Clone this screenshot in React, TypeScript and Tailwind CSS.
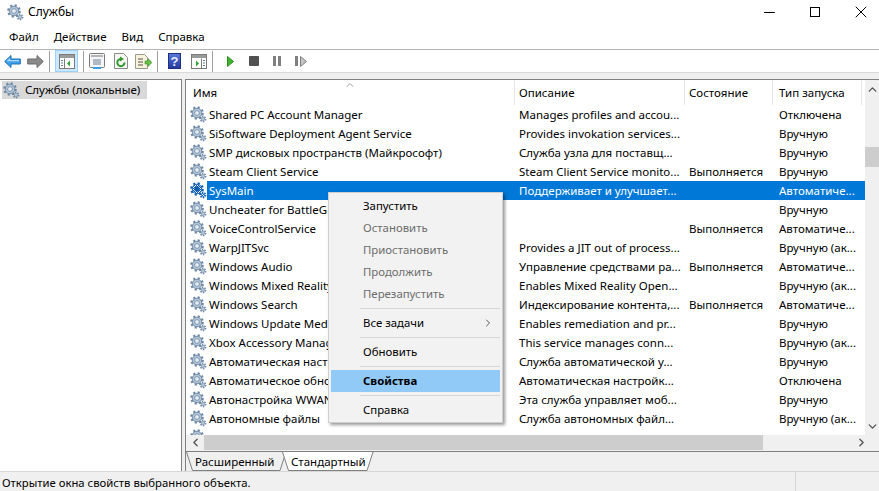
import { ChevronLeft, ChevronRight, ChevronUp, ChevronDown, X, Minus } from 'lucide-react';

const rows = [
  ['Shared PC Account Manager', 'Manages profiles and accou...', '', 'Отключена'],
  ['SiSoftware Deployment Agent Service', 'Provides invokation services...', '', 'Вручную'],
  ['SMP дисковых пространств (Майкрософт)', 'Служба узла для поставщ...', '', 'Вручную'],
  ['Steam Client Service', 'Steam Client Service monito...', 'Выполняется', 'Вручную'],
  ['SysMain', 'Поддерживает и улучшает...', '', 'Автоматиче...'],
  ['Uncheater for BattleGrounds', '', '', 'Вручную'],
  ['VoiceControlService', '', 'Выполняется', 'Автоматиче...'],
  ['WarpJITSvc', 'Provides a JIT out of process...', '', 'Вручную (ак...'],
  ['Windows Audio', 'Управление средствами ра...', 'Выполняется', 'Автоматиче...'],
  ['Windows Mixed Reality OpenXR', 'Enables Mixed Reality Open...', '', 'Вручную (ак...'],
  ['Windows Search', 'Индексирование контента,...', 'Выполняется', 'Автоматиче...'],
  ['Windows Update Medic Service', 'Enables remediation and pr...', '', 'Вручную'],
  ['Xbox Accessory Management', 'This service manages conn...', '', 'Вручную (ак...'],
  ['Автоматическая настройка', 'Служба автоматической у...', '', 'Вручную'],
  ['Автоматическое обновление', 'Автоматическая настройк...', '', 'Отключена'],
  ['Автонастройка WWAN', 'Эта служба управляет моб...', '', 'Вручную'],
  ['Автономные файлы', 'Служба автономных файл...', '', 'Вручную (ак...'],
  ['', '', '', ''],
];

const Gear = ({ selected = false }: { selected?: boolean }) => {
  const dark = selected ? '#0f5fb4' : '#6c87a4';
  const light = selected ? 'url(#dither)' : '#b4c5d6';
  return (
    <svg width="17" height="17" viewBox="0 0 17 17" className="shrink-0">
      {selected && (
        <pattern id="dither" width="2" height="2" patternUnits="userSpaceOnUse">
          <rect width="2" height="2" fill="#0a5cb0" />
          <rect width="1" height="1" fill="#ffffff" />
          <rect x="1" y="1" width="1" height="1" fill="#ffffff" />
        </pattern>
      )}
      <circle cx="7" cy="7" r="5.5" fill="none" stroke={dark} strokeWidth="2.6" strokeDasharray="2 2.32" />
      <circle cx="7" cy="7" r="4.8" fill={light} stroke={dark} strokeWidth="0.9" />
      <circle cx="7" cy="7" r="2.4" fill={selected ? '#0a5cb0' : '#e6edf4'} stroke={dark} strokeWidth="0.8" />
      <circle cx="13" cy="13" r="2.6" fill="none" stroke={dark} strokeWidth="1.6" strokeDasharray="1.4 1.3" />
      <circle cx="13" cy="13" r="1.8" fill={light} stroke={dark} strokeWidth="0.6" />
    </svg>
  );
};

const Sep = () => <div className="w-px h-[21px] bg-[#a0a0a0]" />;

const Slot = ({ children, className = '' }: { children: React.ReactNode; className?: string }) => (
  <div className={`w-[23px] h-[22px] flex items-center justify-center shrink-0 ${className}`}>{children}</div>
);

const PaneIcon = ({ right = false }: { right?: boolean }) => (
  <svg width="16" height="15" viewBox="0 0 16 15">
    <rect x="0.5" y="0.5" width="15" height="14" fill="#fff" stroke="#7b7b7b" />
    <rect x="1" y="1" width="14" height="3" fill="#9a9a9a" />
    {right ? (
      <>
        <path d="M10.5 4.5v10" stroke="#7b7b7b" />
        <path d="M12 6.5h2M12 9h2M12 11.5h2" stroke="#5f7f9f" />
        <path d="M5 6.5l3 3-3 3z" fill="#2fa52f" />
      </>
    ) : (
      <>
        <path d="M5.5 4.5v10" stroke="#7b7b7b" />
        <path d="M2 6.5h2M2 9h2M2 11.5h2" stroke="#5f7f9f" />
        <path d="M11 6.5l-3 3 3 3z" fill="#2fa52f" />
      </>
    )}
  </svg>
);

const Toolbar = () => (
  <div className="h-[22px] flex items-center bg-white pl-px shrink-0">
    <Slot>
      <svg width="17" height="13" viewBox="0 0 17 13">
        <path d="M7 .5L.7 6.5 7 12.5V9h9.3V4H7z" fill="#3f9fe8" stroke="#1d6fb8" />
        <path d="M6 3L2.5 6.3H15V5H6z" fill="#a8dcfb" />
      </svg>
    </Slot>
    <Slot>
      <svg width="17" height="13" viewBox="0 0 17 13">
        <path d="M10 .5l6.3 6-6.3 6V9H.7V4H10z" fill="#8a8a8a" stroke="#6a6a6a" />
      </svg>
    </Slot>
    <div className="ml-[2px]"><Sep /></div>
    <Slot className="ml-[5px] bg-[#cce8ff] border border-[#99d1ff]"><PaneIcon /></Slot>
    <div className="ml-[5px]"><Sep /></div>
    <Slot className="ml-[1px]">
      <svg width="16" height="16" viewBox="0 0 16 16">
        <rect x="0.5" y="0.5" width="15" height="14" rx="1" fill="#f5f5f5" stroke="#7b7b7b" />
        <rect x="2" y="2" width="12" height="2" fill="#b5b5b5" />
        <path d="M4 7h8M4 9h8M4 11h8" stroke="#6a7f96" />
        <rect x="4" y="14" width="8" height="2" fill="#36a0e8" />
      </svg>
    </Slot>
    <Slot className="ml-px">
      <svg width="14" height="16" viewBox="0 0 14 16">
        <path d="M.5.5h9l4 4v11H.5z" fill="#f7f7f2" stroke="#8c8c8c" />
        <path d="M10.5 9.5A3.6 3.6 0 1 1 7 6" fill="none" stroke="#2f9a2f" strokeWidth="2" />
        <path d="M6 3.5l4 2.6L6 8.5z" fill="#2f9a2f" />
      </svg>
    </Slot>
    <Slot>
      <svg width="17" height="15" viewBox="0 0 17 15">
        <path d="M.5.5h9l3 3v11H.5z" fill="#f6f2dc" stroke="#9a9a8a" />
        <path d="M3 5h5M3 8h5M3 11h5" stroke="#555" />
        <path d="M10 7h3V4.5L17 8.5l-4 4V10h-3z" fill="#6cc04a" stroke="#3f8f2a" strokeWidth="0.6" />
      </svg>
    </Slot>
    <div className="ml-[2px]"><Sep /></div>
    <Slot className="ml-[5px]">
      <div className="w-[13px] h-[16px] bg-gradient-to-b from-[#5a78d8] to-[#2438a0] border border-[#1c2f80] flex items-center justify-center text-[#e8ecfa] text-[13px] font-bold leading-none [font-family:'Liberation_Sans',sans-serif]">?</div>
    </Slot>
    <Slot className="ml-[1px]"><PaneIcon right /></Slot>
    <div className="ml-[2px]"><Sep /></div>
    <Slot className="ml-[6px]">
      <svg width="7" height="11" viewBox="0 0 7 11"><path d="M.5.5l6 5-6 5z" fill="#3fb52f" stroke="#2d8f22" /></svg>
    </Slot>
    <Slot>
      <div className="w-[10px] h-[10px] bg-[#505050] rounded-[1px]" />
    </Slot>
    <Slot>
      <div className="flex gap-[2px]">
        <div className="w-[3px] h-[10px] bg-[#808080]" />
        <div className="w-[3px] h-[10px] bg-[#808080]" />
      </div>
    </Slot>
    <Slot className="ml-px">
      <div className="flex gap-[2px] items-center">
        <div className="w-[3px] h-[10px] bg-[#808080]" />
        <svg width="7" height="11" viewBox="0 0 7 11"><path d="M.5.5l6 5-6 5z" fill="#c4c4c4" stroke="#808080" /></svg>
      </div>
    </Slot>
  </div>
);

const MenuItem = ({ label, disabled = false, active = false, arrow = false }: { label: string; disabled?: boolean; active?: boolean; arrow?: boolean }) => (
  <div className={`h-[22px] mx-[2px] flex items-center justify-between pl-[32px] pr-[6px] ${active ? 'bg-[#91c9f7] font-bold' : ''} ${disabled ? 'text-[#6d6d6d]' : 'text-black'}`}>
    <span>{label}</span>
    {arrow && <ChevronRight size={12} strokeWidth={1.6} className="text-[#333]" />}
  </div>
);

const MenuSep = () => <div className="h-px bg-[#d7d7d7] ml-[31px] mr-[2px] my-[3px]" />;

const ContextMenu = () => (
  <div className="absolute left-[328px] top-[192px] w-[175px] h-[231px] bg-[#f2f2f2] border border-[#cfcfcf] shadow-[2px_2px_3px_rgba(0,0,0,0.4)] pt-[2px] text-[11.4px]">
    <MenuItem label="Запустить" />
    <MenuItem label="Остановить" disabled />
    <MenuItem label="Приостановить" disabled />
    <MenuItem label="Продолжить" disabled />
    <MenuItem label="Перезапустить" disabled />
    <MenuSep />
    <MenuItem label="Все задачи" arrow />
    <MenuSep />
    <MenuItem label="Обновить" />
    <MenuSep />
    <MenuItem label="Свойства" active />
    <MenuSep />
    <MenuItem label="Справка" />
  </div>
);

const Tab = ({ label, width, active = false }: { label: string; width: number; active?: boolean }) => (
  <div className="relative h-[19px] flex items-center pl-[9px]" style={{ width }}>
    <svg className="absolute inset-0" width={width} height="19" viewBox={`0 0 ${width} 19`}>
      <path
        d={`M0.5 0L6.5 18.5H${width - 7}L${width - 1} 0`}
        fill={active ? '#ffffff' : '#f0f0f0'}
        stroke="#808080"
      />
    </svg>
    <span className="relative">{label}</span>
  </div>
);

export default function App() {
  return (
    <div className="relative w-[879px] h-[491px] overflow-hidden bg-white flex flex-col text-[11.5px] leading-none text-black [font-family:'Noto_Sans',sans-serif]">
      <div className="h-[24px] flex items-center pl-[7px] shrink-0">
        <Gear />
        <span className="ml-[4px] text-[12px]">Службы</span>
        <div className="ml-auto flex items-center text-black">
          <div className="w-[46px] flex justify-center"><Minus size={17} strokeWidth={1} absoluteStrokeWidth /></div>
          <div className="w-[46px] flex justify-center"><div className="w-[10px] h-[10px] border border-black" /></div>
          <div className="ml-[5px] w-[36px] flex justify-center"><X size={20} strokeWidth={1} absoluteStrokeWidth /></div>
        </div>
      </div>
      <div className="h-[26px] flex items-center gap-[15px] pl-[9px] border-b border-[#b4b4b4] shrink-0">
        <span>Файл</span>
        <span>Действие</span>
        <span>Вид</span>
        <span>Справка</span>
      </div>
      <Toolbar />
      <div className="h-[7px] bg-[#f0f0f0] border-t border-[#dadada] shrink-0" />
      <div className="flex-1 flex bg-[#f0f0f0] min-h-0">
        <div className="w-[182px] border-t border-r border-[#808080] bg-white pt-[1px] pl-[2px] shrink-0">
          <div className="h-[18px] w-[145px] bg-[#d9d9d9] flex items-center pl-px gap-[5px]">
            <Gear />
            <span>Службы (локальные)</span>
          </div>
        </div>
        <div className="ml-[3px] flex-1 border-t border-l border-[#808080] flex flex-col min-w-0">
          <div className="flex h-[355px] shrink-0">
            <div className="flex-1 bg-white min-w-0 overflow-hidden">
              <div className="h-[25px] flex items-center relative">
                <span className="absolute left-[158px] top-[-1px] text-[#666]"><ChevronUp size={12} strokeWidth={1.3} /></span>
                <div className="w-[329px] h-full pl-[7px] flex items-center border-r border-[#e5e5e5]">Имя</div>
                <div className="w-[170px] h-full pl-[4px] flex items-center border-r border-[#e5e5e5]">Описание</div>
                <div className="w-[88px] h-full pl-[4px] flex items-center border-r border-[#e5e5e5]">Состояние</div>
                <div className="w-[89px] h-full pl-[6px] flex items-center border-r border-[#e5e5e5]">Тип запуска</div>
              </div>
              {rows.map((r, i) => {
                const selected = r[0] === 'SysMain';
                return (
                  <div key={i} className="h-[19px] flex items-center pl-[4px] whitespace-nowrap">
                    <Gear selected={selected} />
                    <div className={`flex-1 h-full flex items-center ${selected ? 'bg-[#0078d7] text-white' : ''}`}>
                      <div className="w-[308px] pl-[2px]">{r[0]}</div>
                      <div className="w-[170px] pl-[4px]">{r[1]}</div>
                      <div className="w-[90px] pl-[4px]">{r[2]}</div>
                      <div className="flex-1 pl-[4px]">{r[3]}</div>
                    </div>
                  </div>
                );
              })}
            </div>
            <div className="w-[14px] bg-[#f0f0f0] flex flex-col items-center justify-between shrink-0 relative text-[#555]">
              <ChevronUp size={13} strokeWidth={2.5} className="mt-[3px]" />
              <div className="absolute top-[67px] left-0 w-full h-[20px] bg-[#cdcdcd]" />
              <ChevronDown size={13} strokeWidth={2.5} className="mb-[2px]" />
            </div>
          </div>
          <div className="h-[15px] flex items-center bg-[#f0f0f0] shrink-0 text-[#555]">
            <div className="w-[18px] flex justify-center"><ChevronLeft size={13} strokeWidth={2.5} /></div>
            <div className="w-[559px] h-full bg-[#cdcdcd]" />
            <div className="ml-auto w-[30px] flex justify-center pr-[6px]"><ChevronRight size={13} strokeWidth={2.5} /></div>
          </div>
          <div className="h-[1px] shrink-0" />
          <div className="flex-1 border-t border-[#808080] flex">
            <Tab label="Расширенный" width={101} />
            <div className="-ml-[5px]"><Tab label="Стандартный" width={92} active /></div>
          </div>
        </div>
      </div>
      <div className="h-[20px] border-t border-[#d7d7d7] bg-[#f0f0f0] flex items-center shrink-0 text-[11.3px]">
        <span className="pl-[2px] pt-[3px] w-[796px] h-full flex items-center border-r border-[#d7d7d7]">Открытие окна свойств выбранного объекта.</span>
      </div>
      <ContextMenu />
    </div>
  );
}
